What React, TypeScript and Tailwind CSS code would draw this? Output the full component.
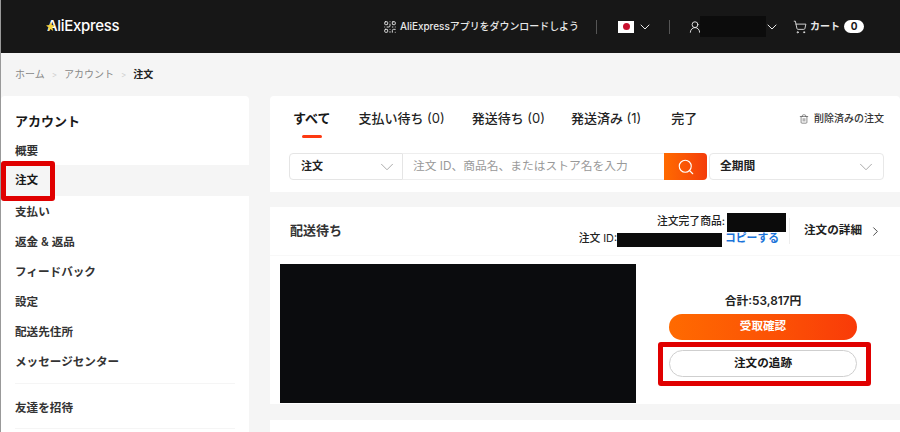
import React from 'react';
import { ChevronDown, ChevronRight, QrCode, Search, ShoppingCart, Trash2, UserRound } from 'lucide-react';

const font = "font-['Inter','Noto_Sans_CJK_JP',sans-serif]";

const navItems = ['支払い', '返金 & 返品', 'フィードバック', '設定', '配送先住所', 'メッセージセンター'];

const tabs = [
  { label: '支払い待ち', count: '(0)', gap: 'mr-[27px]' },
  { label: '発送待ち', count: '(0)', gap: 'mr-[26px]' },
  { label: '発送済み', count: '(1)', gap: 'mr-[30px]' },
];

const Header = () => (
  <header className="h-[53px] bg-[#171717] flex items-center text-white">
    <div className="ml-[47px] text-[15px] font-medium tracking-[-0.3px] relative">
      AliExpress
      <svg viewBox="0 0 10 10" className="absolute left-[-1px] top-[7px] w-[9px] h-[9px] text-[#f5d33f]">
        <path fill="currentColor" d="M5 0l1.2 3.4L10 3.8 7 6l1 4-3-2.200L2 10l1-4L0 3.800l3.800-.4z" />
      </svg>
    </div>
    <div className="ml-auto mr-[36px] flex items-center text-[9.95px] font-medium text-[#e8e8e8]">
      <QrCode size={14} strokeWidth={1.6} className="mr-[3px]" />
      <span>AliExpressアプリをダウンロードしよう</span>
      <div className="w-px h-[14px] bg-[#555] ml-[17px] mr-[21px]" />
      <div className="w-[16px] h-[12px] bg-white flex items-center justify-center">
        <div className="w-[7px] h-[7px] rounded-full bg-[#c8102e]" />
      </div>
      <ChevronDown size={16} strokeWidth={1.5} className="ml-[3px]" />
      <div className="w-px h-[14px] bg-[#555] ml-[16px] mr-[18px]" />
      <UserRound size={14} strokeWidth={1.6} className="mr-[-2px]" />
      <div className="w-[66px] h-[21px] bg-[#0c0c0c]" />
      <ChevronDown size={16} strokeWidth={1.5} className="ml-[-2px]" />
      <ShoppingCart size={14} strokeWidth={1.5} className="ml-[13px]" />
      <span className="ml-[3px] text-[10px] font-semibold">カート</span>
      <div className="ml-[4px] w-[20px] h-[13px] rounded-full bg-white text-[#171717] text-[10px] font-bold flex items-center justify-center">0</div>
    </div>
  </header>
);

const Sidebar = () => (
  <aside className="w-[248px] ml-px shrink-0 bg-white rounded-t-[4px] relative h-[336px] overflow-hidden">
    <h2 className="pl-[14px] pt-[16px] h-[39px] text-[13px] leading-[18px] font-semibold text-[#191919]">アカウント</h2>
    <div className="pl-[14px] pt-[3px] h-[30px] flex items-center text-[11.6px] font-semibold text-[#333]">概要</div>
    <div className="pl-[14px] pt-[1px] h-[31px] flex items-center text-[11.6px] font-semibold text-[#191919] bg-[#f5f5f5]">注文</div>
    {navItems.map((item) => (
      <div key={item} className="pl-[14px] pt-[3px] h-[30px] flex items-center text-[11.6px] font-semibold text-[#333]">{item}</div>
    ))}
    <div className="mx-[14px] mt-[7px] border-t border-[#f5f5f5]" />
    <div className="pl-[14px] pt-[3px] h-[30px] mt-[8px] flex items-center text-[11.6px] font-semibold text-[#333]">友達を招待</div>
    <div className="mx-[14px] mt-[6px] border-t border-[#f5f5f5]" />
  </aside>
);

const Filters = () => (
  <section className="bg-white h-[96px] pl-[19px] pr-[16px] rounded-t-[4px]">
    <div className="flex items-center h-[45px] text-[13px] font-medium text-[#222]">
      <div className="relative mr-[28px] pl-[4px] font-semibold text-[#191919]">
        すべて
        <div className="absolute left-[13px] top-[26px] w-[20px] h-[3px] rounded-full bg-[#fd3a12]" />
      </div>
      {tabs.map((tab) => (
        <div key={tab.label} className={tab.gap}>
          {tab.label} <span className="font-normal">{tab.count}</span>
        </div>
      ))}
      <div>完了</div>
      <div className="ml-auto flex items-center text-[10px] font-medium text-[#333]">
        <Trash2 size={10} strokeWidth={1.6} className="mr-[5px] text-[#555]" />
        削除済みの注文
      </div>
    </div>
    <div className="flex items-center mt-[12px] h-[27px]">
      <div className="w-[114px] h-full border border-[#e5e5e5] rounded-l-[4px] flex items-center justify-between pl-[11px] pr-[4px] text-[11px] font-semibold text-[#222]">
        注文
        <ChevronDown size={22} strokeWidth={0.9} className="text-[#999]" />
      </div>
      <div className="w-[261px] h-full border-y border-[#eeeeee] pl-[10px] flex items-center text-[11.75px] text-[#999]">
        注文 ID、商品名、またはストア名を入力
      </div>
      <div className="w-[43px] h-full rounded-r-[4px] bg-gradient-to-r from-[#ff6a00] to-[#f43c0a] flex items-center justify-center">
        <Search size={18} strokeWidth={1.5} className="text-white" />
      </div>
      <div className="ml-[2px] flex-1 h-full border border-[#e8e8e8] rounded-[4px] flex items-center justify-between pl-[10px] pr-[6px] text-[11.75px] font-semibold text-[#222]">
        全期間
        <ChevronDown size={22} strokeWidth={0.9} className="text-[#999]" />
      </div>
    </div>
  </section>
);

const OrderCard = () => (
  <section className="bg-white h-[197px] mt-[15px]">
    <div className="h-[49px] flex items-center pl-[20px] border-b border-[#f8f8f8]">
      <span className="text-[13px] font-semibold text-[#333]">配送待ち</span>
      <div className="ml-auto -mt-[2px] flex flex-col items-end text-[10.8px] font-medium text-[#222]">
        <div className="flex items-center h-[19px]">
          注文完了商品:
          <div className="w-[59px] h-[19px] bg-[#0b0b0b] ml-[2px]" />
        </div>
        <div className="flex items-center h-[15px] mr-[7px]">
          注文 <span className="font-normal ml-[3px]">ID:</span>
          <div className="w-[105px] h-[14px] bg-[#0b0b0b]" />
          <span className="ml-[3px] text-[10.8px] font-semibold text-[#1a73d9]">コピーする</span>
        </div>
      </div>
      <div className="w-px h-[26px] bg-[#eeeeee] ml-[3px] mr-[14px]" />
      <span className="text-[11.6px] font-semibold text-[#222]">注文の詳細</span>
      <ChevronRight size={15} strokeWidth={1.4} className="ml-[6px] mr-[17px] text-[#333]" />
    </div>
    <div className="flex pl-[10px] pt-[8px]">
      <div className="w-[356px] h-[139px] bg-[#0b0c0e]" />
      <div className="ml-[33px] w-[188px] pt-[30px] flex flex-col items-center">
        <div className="text-[11.8px] leading-[15px] font-semibold text-[#222]">合計:53,817円</div>
        <div className="mt-[5px] w-[188px] h-[26px] rounded-full bg-gradient-to-r from-[#ff6a00] to-[#f93a08] text-white text-[11.6px] font-semibold flex items-center justify-center">受取確認</div>
        <div className="mt-[10px] w-[188px] h-[27px] rounded-full border border-[#cfcfcf] text-[#191919] text-[11.6px] font-semibold flex items-center justify-center">注文の追跡</div>
      </div>
    </div>
  </section>
);

export default function App() {
  return (
    <div className={`${font} relative w-[900px] h-[432px] overflow-hidden bg-[#f5f5f5]`}>
      <Header />
      <div className="h-[43px] pl-[15px] flex items-center text-[10px] text-[#888]">
        <span>ホーム</span>
        <span className="mx-[7px] text-[#ccc] text-[8px]">&gt;</span>
        <span>アカウント</span>
        <span className="mx-[7px] text-[#ccc] text-[8px]">&gt;</span>
        <span className="font-semibold text-[#222]">注文</span>
      </div>
      <div className="flex">
        <Sidebar />
        <main className="ml-[21px] w-[630px]">
          <Filters />
          <OrderCard />
          <div className="bg-white h-[20px] mt-[16px]" />
        </main>
      </div>
      <div className="absolute left-0 top-0 w-px h-full bg-[#999]" />
      <div className="absolute left-px top-[161px] w-[54px] h-[40px] border-[5px] border-[#e00000] rounded-[3px]" />
      <div className="absolute left-[658px] top-[342px] w-[213px] h-[44px] border-[5px] border-[#e00000] rounded-[3px]" />
    </div>
  );
}
